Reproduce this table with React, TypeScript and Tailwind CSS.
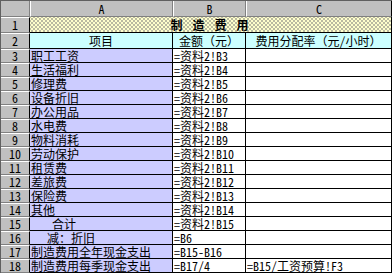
const rows: { a: string; b: string; c?: string; indent?: string }[] = [
  { a: '职工工资', b: '=资料2!B3' },
  { a: '生活福利', b: '=资料2!B4' },
  { a: '修理费', b: '=资料2!B5' },
  { a: '设备折旧', b: '=资料2!B6' },
  { a: '办公用品', b: '=资料2!B7' },
  { a: '水电费', b: '=资料2!B8' },
  { a: '物料消耗', b: '=资料2!B9' },
  { a: '劳动保护', b: '=资料2!B10' },
  { a: '租赁费', b: '=资料2!B11' },
  { a: '差旅费', b: '=资料2!B12' },
  { a: '保险费', b: '=资料2!B13' },
  { a: '其他', b: '=资料2!B14' },
  { a: '合计', b: '=资料2!B15', indent: 'pl-[22px]' },
  { a: '减：折旧', b: '=B6', indent: 'pl-[17px]' },
  { a: '制造费用全年现金支出', b: '=B15-B16' },
  { a: '制造费用每季现金支出', b: '=B17/4', c: '=B15/工资预算!F3' },
]

const font = "font-['Noto_Sans_Mono_CJK_SC','Noto_Sans_CJK_SC',monospace]"

const RowHead = ({ n, h }: { n: string; h: string }) => (
  <div className={`${h} w-[29px] shrink-0 bg-[#c0c0c0] border-t border-t-white border-r border-r-black border-b border-b-[#808080] flex items-center justify-center text-[12px] leading-[12px]`}>
    {n}
  </div>
)

export default function App() {
  return (
    <div className={`w-[392px] h-[273px] bg-white border-t border-l border-[#606060] text-black ${font} text-[12px] overflow-hidden`}>
      {/* column letters */}
      <div className="flex h-[16px]">
        <div className="w-[29px] shrink-0 bg-[#c0c0c0] border-r border-r-[#808080] border-b border-b-[#808080]" />
        <div className="w-[143px] bg-[#c0c0c0] border-l border-l-white border-r border-r-[#808080] border-b border-b-[#808080] flex items-center justify-center leading-[12px]">A</div>
        <div className="w-[73px] bg-[#c0c0c0] border-l border-l-white border-r border-r-[#808080] border-b border-b-[#808080] flex items-center justify-center leading-[12px]">B</div>
        <div className="w-[146px] bg-[#c0c0c0] border-l border-l-white border-r border-r-black border-b border-b-[#808080] flex items-center justify-center leading-[12px]">C</div>
      </div>

      {/* title */}
      <div className="flex h-[16px]">
        <RowHead n="1" h="h-[16px]" />
        <div className="w-[362px] border-r border-b border-black bg-[#ffffcc] bg-[radial-gradient(circle,#b8b8a0_0.7px,transparent_0.9px),radial-gradient(circle,#b8b8a0_0.7px,transparent_0.9px)] bg-[length:4px_4px] bg-[position:0_0,2px_2px] flex items-center justify-center font-bold tracking-[2px] leading-[14px]">
          制 造 费 用
        </div>
      </div>

      {/* headings */}
      <div className="flex h-[16px] bg-[#ccffff]">
        <RowHead n="2" h="h-[16px]" />
        <div className="w-[143px] border-r border-b border-black flex items-end justify-center leading-[15px]">项目</div>
        <div className="w-[73px] border-r border-b border-black flex items-end justify-center leading-[15px] whitespace-nowrap">金额（元）</div>
        <div className="w-[146px] border-r border-b border-black flex items-end justify-center leading-[15px] whitespace-nowrap">费用分配率（元/小时）</div>
      </div>

      {rows.map((r, i) => (
        <div key={i} className="flex h-[14px]">
          <RowHead n={String(i + 3)} h="h-[14px]" />
          <div className={`w-[143px] bg-[#ccccff] border-r border-b border-black leading-[13px] whitespace-nowrap ${r.indent ?? 'pl-[1px]'}`}>
            <span className="underline underline-offset-1">{r.a}</span>
          </div>
          <div className="w-[73px] border-r border-b border-black leading-[13px] whitespace-nowrap pl-[1px]">
            <span className="underline underline-offset-1">{r.b}</span>
          </div>
          <div className="w-[146px] border-r border-b border-black leading-[13px] whitespace-nowrap pl-[1px]">
            {r.c && <span className="underline underline-offset-1">{r.c}</span>}
          </div>
        </div>
      ))}
    </div>
  )
}
